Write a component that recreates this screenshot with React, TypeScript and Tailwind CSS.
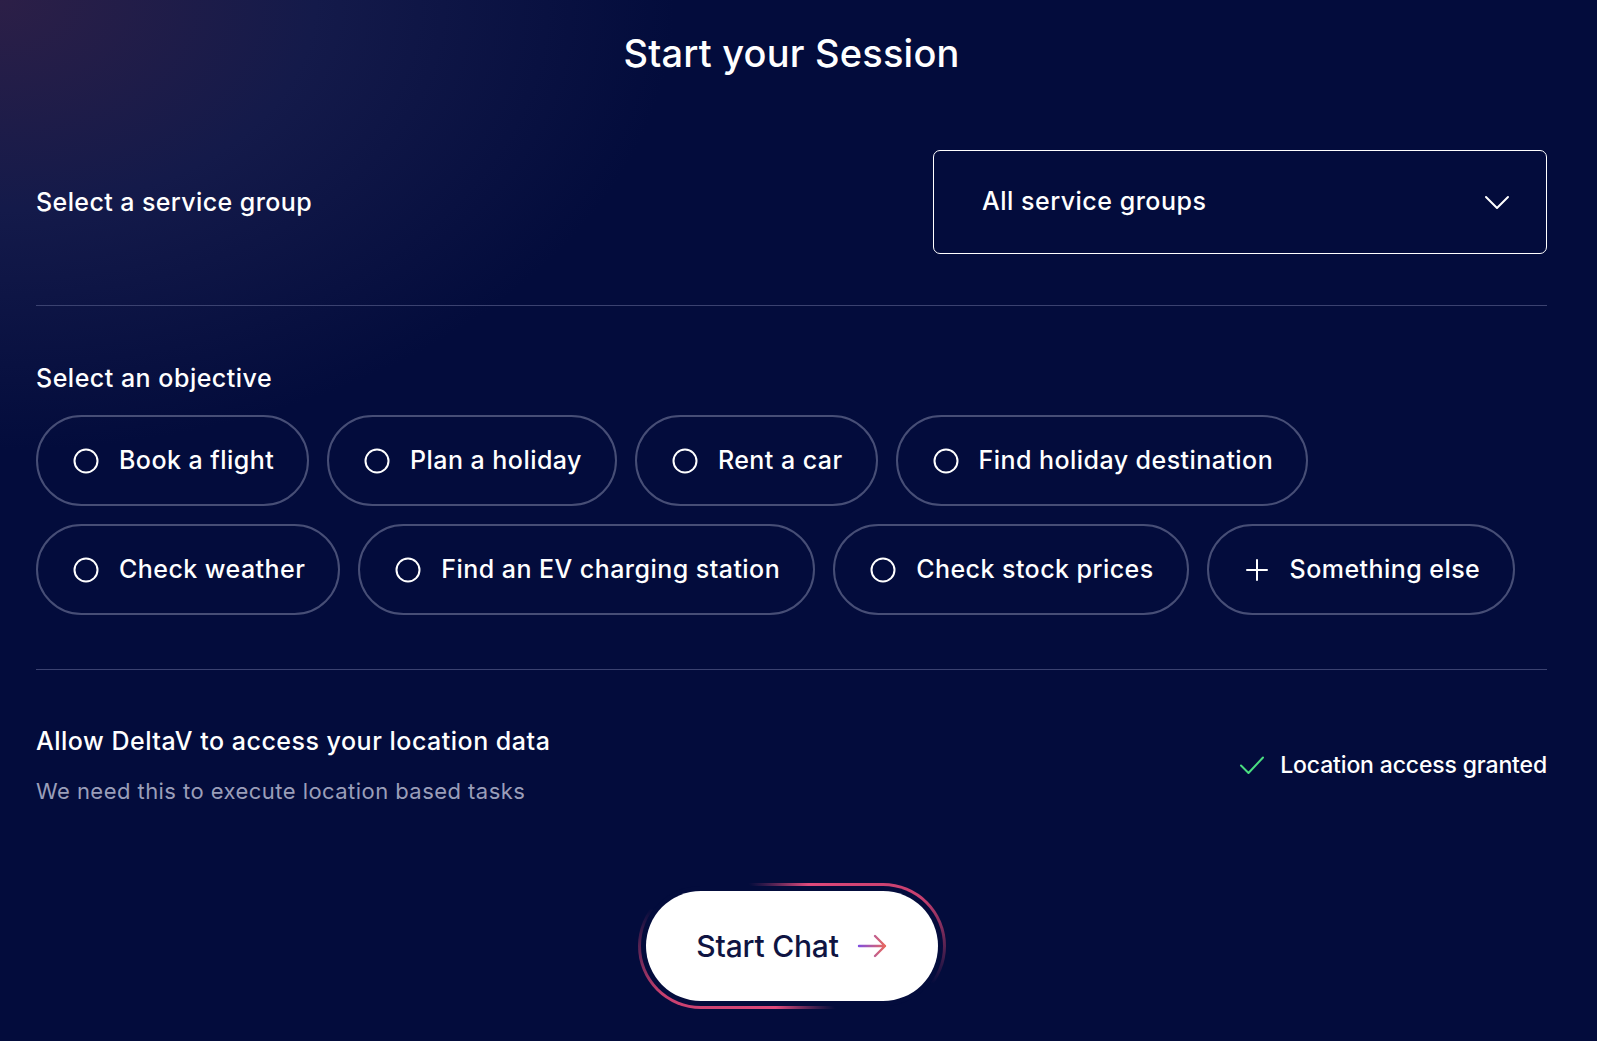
import React from 'react';

const objectivesTop = ['Book a flight', 'Plan a holiday', 'Rent a car', 'Find holiday destination'];
const objectivesBottom = ['Check weather', 'Find an EV charging station', 'Check stock prices'];

const RadioIcon = () => (
  <svg width="26" height="26" viewBox="0 0 26 26" fill="none">
    <circle cx="13" cy="13" r="11.5" stroke="white" strokeWidth="2" />
  </svg>
);

const PlusIcon = () => (
  <svg width="26" height="26" viewBox="0 0 26 26" fill="none">
    <path d="M13 3v20M3 13h20" stroke="white" strokeWidth="2" strokeLinecap="round" />
  </svg>
);

const Chip: React.FC<{ label: string; icon?: React.ReactNode }> = ({ label, icon }) => (
  <button className="h-[91px] rounded-full border-2 border-[#474e76] pl-[35px] pr-[33px] flex items-center gap-[20px] text-[25px] tracking-[0.45px] font-medium text-white whitespace-nowrap">
    {icon ?? <RadioIcon />}
    <span>{label}</span>
  </button>
);

export default function App() {
  return (
    <div className="min-h-screen w-full bg-[#030c3c] bg-[radial-gradient(ellipse_900px_600px_at_0%_0%,#2c1f47_0%,#141a4a_35%,#08104200_75%)] font-['Inter','Noto_Sans',sans-serif] text-white">
      <div className="pl-[36px] pr-[50px] pb-[32px]">
        <h1 className="pt-[31px] text-center text-[38px] leading-[44px] font-medium tracking-[0.2px]">
          Start your Session
        </h1>

        <div className="mt-[75px] flex items-center justify-between">
          <span className="text-[25px] leading-[32px] tracking-[0.4px] font-medium">Select a service group</span>
          <button className="w-[614px] h-[104px] rounded-[7px] border-[1.5px] border-white pl-[48px] pr-[36px] flex items-center justify-between">
            <span className="text-[25px] tracking-[0.5px] font-medium">All service groups</span>
            <svg width="26" height="16" viewBox="0 0 26 16" fill="none">
              <path d="M2 3l11 11L24 3" stroke="white" strokeWidth="2" strokeLinecap="round" strokeLinejoin="round" />
            </svg>
          </button>
        </div>

        <div className="mt-[51px] h-px bg-[#3b4270]" />

        <h2 className="mt-[56px] text-[25px] leading-[32px] tracking-[0.5px] font-medium">Select an objective</h2>
        <div className="mt-[21px] flex flex-col gap-[18px]">
          <div className="flex gap-[18px]">
            {objectivesTop.map((o) => (
              <Chip key={o} label={o} />
            ))}
          </div>
          <div className="flex gap-[18px]">
            {objectivesBottom.map((o) => (
              <Chip key={o} label={o} />
            ))}
            <Chip label="Something else" icon={<PlusIcon />} />
          </div>
        </div>

        <div className="mt-[54px] h-px bg-[#3b4270]" />

        <div className="mt-[55px] flex items-center justify-between">
          <div>
            <h3 className="text-[25px] leading-[32px] tracking-[0.5px] font-medium">Allow DeltaV to access your location data</h3>
            <p className="mt-[20px] text-[22px] leading-[28px] tracking-[0.45px] text-[#9a9eb9]">We need this to execute location based tasks</p>
          </div>
          <div className="flex items-center gap-[15px]">
            <svg width="26" height="20" viewBox="0 0 26 20" fill="none">
              <path d="M2 10.5l7.5 7.5L24 2.5" stroke="#4ade80" strokeWidth="2" strokeLinecap="round" strokeLinejoin="round" />
            </svg>
            <span className="text-[23px] tracking-[-0.15px] font-medium">Location access granted</span>
          </div>
        </div>

        <div className="mt-[78px] flex justify-center">
          <div className="rounded-full p-[3px] bg-[conic-gradient(from_-35deg,transparent_0deg,#e04a7c_50deg,#c8406f_105deg,transparent_140deg,transparent_180deg,#e04a7c_230deg,#c8406f_285deg,transparent_320deg)]">
            <div className="rounded-full p-[5px] bg-[#030c3c]">
              <button className="w-[292px] h-[110px] rounded-full bg-white flex items-center justify-center gap-[18px]">
                <span className="text-[30px] tracking-[-0.2px] font-medium text-[#0f1442]">Start Chat</span>
                <svg width="30" height="24" viewBox="0 0 30 24" fill="none">
                  <defs>
                    <linearGradient id="arrowGrad" x1="0" y1="0" x2="30" y2="0" gradientUnits="userSpaceOnUse">
                      <stop offset="0" stopColor="#7c4de6" />
                      <stop offset="1" stopColor="#ef6a55" />
                    </linearGradient>
                  </defs>
                  <path d="M2 12h26M18 2l10 10-10 10" stroke="url(#arrowGrad)" strokeWidth="2.4" strokeLinecap="round" strokeLinejoin="round" />
                </svg>
              </button>
            </div>
          </div>
        </div>
      </div>
    </div>
  );
}
